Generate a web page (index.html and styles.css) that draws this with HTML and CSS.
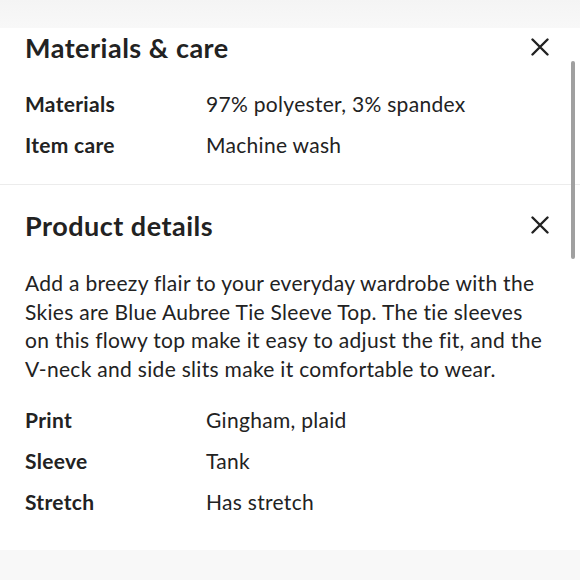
FILE: index.html
```html
<!DOCTYPE html>
<html>
<head>
<meta charset="utf-8">
<link rel="stylesheet" href="styles.css">
</head>
<body>
<div class="topband"></div>
<div class="panel">
  <section class="sec sec-materials">
    <div class="sec-head">
      <h2 class="sec-title">Materials &amp; care</h2>
      <svg class="close" viewBox="0 0 18 18" width="18" height="18"><path d="M1.5 1.5L16.5 16.5M16.5 1.5L1.5 16.5" stroke="#222" stroke-width="2.4" stroke-linecap="round"/></svg>
    </div>
    <div class="attrs">
      <div class="attr-label">Materials</div><div class="attr-value">97% polyester, 3% spandex</div>
      <div class="attr-label">Item care</div><div class="attr-value">Machine wash</div>
    </div>
  </section>
  <section class="sec sec-details">
    <div class="sec-head">
      <h2 class="sec-title">Product details</h2>
      <svg class="close" viewBox="0 0 18 18" width="18" height="18"><path d="M1.5 1.5L16.5 16.5M16.5 1.5L1.5 16.5" stroke="#222" stroke-width="2.4" stroke-linecap="round"/></svg>
    </div>
    <p class="desc">Add a breezy flair to your everyday wardrobe with the Skies are Blue Aubree Tie Sleeve Top. The tie sleeves on this flowy top make it easy to adjust the fit, and the V-neck and side slits make it comfortable to wear.</p>
    <div class="attrs">
      <div class="attr-label">Print</div><div class="attr-value">Gingham, plaid</div>
      <div class="attr-label">Sleeve</div><div class="attr-value">Tank</div>
      <div class="attr-label">Stretch</div><div class="attr-value">Has stretch</div>
    </div>
  </section>
  <div class="scrollbar"></div>
</div>
<div class="bottomband"></div>
</body>
</html>
```
FILE: styles.css
```css
html, body {
  margin: 0;
  padding: 0;
  background: #fff;
  height: 580px;
  overflow: hidden;
}
body {
  font-family: Lato, "Noto Sans", sans-serif;
  color: #222;
  display: flex;
  flex-direction: column;
}
.topband {
  height: 28px;
  background: linear-gradient(#f4f4f4, #f8f8f8);
  flex: none;
}
.panel {
  position: relative;
  flex: 1;
}
.sec {
  padding: 0 31px 0 25px;
}
.sec-materials {
  border-bottom: 1px solid #ececec;
  padding-bottom: 25px;
}
.sec-head {
  display: flex;
  justify-content: space-between;
  align-items: center;
  height: 40px;
}
.sec-materials .sec-head {
  margin-top: -1px;
  margin-bottom: 1px;
}
.sec-details .sec-head {
  margin-top: 20px;
}
.sec-title {
  margin: 0;
  font-size: 27px;
  font-weight: 700;
  letter-spacing: 0.5px;
}
.close {
  width: 18px;
  height: 18px;
  flex: none;
}
.attrs {
  display: grid;
  grid-template-columns: 181px 1fr;
  row-gap: 12px;
  margin-top: 22px;
  font-size: 21px;
  line-height: 29px;
  letter-spacing: 0.3px;
}
.attr-label {
  font-weight: 700;
}
.desc {
  margin: 24px 0 0;
  font-size: 21px;
  line-height: 28.5px;
  letter-spacing: 0.3px;
}
.sec-details .attrs {
  margin-top: 22px;
}
.scrollbar {
  position: absolute;
  right: 5px;
  top: 33px;
  width: 4px;
  height: 198px;
  border-radius: 2px;
  background: #a0a0a0;
}
.bottomband {
  height: 30px;
  background: #f8f8f8;
  flex: none;
}
```
